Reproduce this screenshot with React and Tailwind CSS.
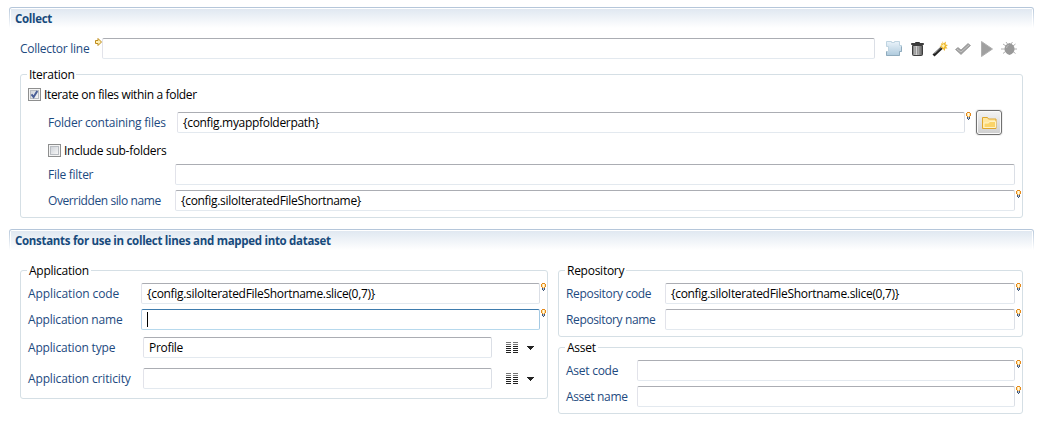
import React from "react";

function Bulb() {
  return (
    <svg width="5" height="8" viewBox="0 0 5 8" className="-mr-[6px] ml-[1px] shrink-0 self-start" shapeRendering="crispEdges">
      <path d="M1 0h3v1h1v3h-1v2h-3v-2h-1v-3h1z" fill="#e58a1c" />
      <path d="M1 1h3v3h-1v1h-1v-1h-1z" fill="#ffe3a3" />
      <path d="M2 1h1v3h-1z" fill="#fffbe8" />
      <path d="M1 5h3v2h-1v1h-1v-1h-1z" fill="#3f5677" />
      <path d="M2 5h1v2h-1z" fill="#b9c4d2" />
    </svg>
  );
}

function Field({ className, value, focused, bulb }) {
  return (
    <div className={"flex h-[21px] shrink-0 " + className}>
      <div
        className={
          "flex h-[21px] w-full shrink-0 items-center rounded-[2px] border bg-white pl-[5px] tracking-[-0.31px] text-black " +
          (focused
            ? "border-t-[#3d7bad] border-r-[#a4c9e3] border-b-[#b7d9ed] border-l-[#b5cfe7]"
            : "border-t-[#abadb3] border-r-[#dbdfe6] border-b-[#e3e9ef] border-l-[#e2e3ea]")
        }
      >
        {focused && <span className="h-[15px] w-px bg-black" />}
        {value}
      </div>
      {bulb && <Bulb />}
    </div>
  );
}

function Check({ checked, className, children }) {
  return (
    <div className="flex h-[13px] items-center gap-[3px] text-black">
      <span className="flex size-[13px] items-center justify-center border border-[#8e8f8f] bg-[#f4f4f4]">
        <span className="flex size-[9px] items-center justify-center border border-[#b9bdc2] bg-linear-to-br from-[#d0d4da] to-[#f6f6f6]">
          {checked && (
            <svg width="9" height="9" viewBox="0 0 9 9" className="shrink-0">
              <path d="M1.500 4.300L3.600 7L7.300 1" fill="none" stroke="#4a5f97" strokeWidth="2" />
            </svg>
          )}
        </span>
      </span>
      <span className={className}>{children}</span>
    </div>
  );
}

function Header({ children }) {
  return (
    <div className="h-[21px] rounded-t-[3px] bg-linear-to-b from-[#b3c5d9] to-white px-px pt-px">
      <div className="h-[20px] rounded-t-[2px] bg-white px-px pt-px">
        <div className="flex h-[19px] items-center bg-linear-to-b from-[#e0e8f1] to-white pl-[4px] text-[11.5px] font-bold tracking-[-0.3px] text-[#174a7c]">
          {children}
        </div>
      </div>
    </div>
  );
}

function Group({ title, className, children }) {
  return (
    <section className={"rounded-[3px] border border-[#d5dfe5] pl-[7px] " + className}>
      <div className="-mt-[8px] -ml-[1px] flex h-[15px]">
        <h3 className="bg-white px-[2px] leading-[15px] text-black">{title}</h3>
      </div>
      {children}
    </section>
  );
}

function Row({ className, label, labelClass, children }) {
  return (
    <div className={"flex h-[21px] items-center " + className}>
      <label className={"shrink-0 " + labelClass}>{label}</label>
      {children}
    </div>
  );
}

function ListMenu() {
  return (
    <svg width="28" height="12" viewBox="0 0 28 12" className="ml-[14px] shrink-0" shapeRendering="crispEdges">
      {[0, 2, 4, 6, 8, 10].map((y) => (
        <path key={y} d={`M0 ${y}h5v1h-5zM7 ${y}h5v1h-5z`} fill={y < 4 ? "#777" : "#222"} />
      ))}
      <path d="M21 4h7v1h-1v1h-1v1h-1v1h-1v-1h-1v-1h-1v-1h-1z" fill="#222" />
    </svg>
  );
}

function Toolbar() {
  return (
    <div className="ml-[11px] flex h-[16px] items-center">
      <svg width="16" height="16" viewBox="0 0 16 16">
        <defs>
          <linearGradient id="piece" x1="0" y1="0" x2="0" y2="1">
            <stop offset="0" stopColor="#eaf3fa" />
            <stop offset="1" stopColor="#aecadd" />
          </linearGradient>
          <linearGradient id="can" x1="0" y1="0" x2="1" y2="0">
            <stop offset="0" stopColor="#666" />
            <stop offset=".35" stopColor="#ddd" />
            <stop offset="1" stopColor="#555" />
          </linearGradient>
        </defs>
        <path d="M.5.5h5v1h3v-1h5v4h2v6h-2v4h-13v-4h2v-5h-2z" fill="url(#piece)" stroke="#bfd4e1" />
        <path d="M.5 10.500v4h13v-4h2v-5" fill="none" stroke="#8fabbd" />
      </svg>
      <svg width="13" height="16" viewBox="0 0 13 16" className="ml-[9px]">
        <path d="M1.500 4.500h10v9q0 1-1 1h-8q-1 0-1-1z" fill="url(#can)" stroke="#3c3c3c" />
        <path d="M4.500 5.500v8M6.500 5.500v8M8.500 5.500v8" stroke="#888" strokeWidth=".7" />
        <path d="M.5 3.500v-1h12v1z" fill="#777" stroke="#3c3c3c" />
        <path d="M4.500 2v-.5h4v.5" fill="none" stroke="#333" />
      </svg>
      <svg width="16" height="16" viewBox="0 0 16 16" className="ml-[8px]">
        <path d="M10.500 0l1 2.500 2.500-2-.5 3 2.500.5-2 1.500 1.500 2-2.500 0 0 2.500-2-2-2.500.5 1-2-2-1.500 2-.5-.5-2.500 1.500 1z" fill="#f0b92c" />
        <path d="M11.500 3l1.500 1.500-1.500 2.500-2-2z" fill="#fff4b5" />
        <path d="M1.500 14.500L9.500 7" stroke="#222" strokeWidth="3" />
        <path d="M2.500 12.500L9 6.500" stroke="#999" strokeWidth=".9" />
      </svg>
      <svg width="16" height="16" viewBox="0 0 16 16" className="ml-[7px]">
        <path d="M.5 8.500L3 6.500L6 9L13 2.500L15.500 4.500L6 13.500z" fill="#9f9f9f" stroke="#929292" strokeWidth=".7" />
        <path d="M2 8.200l4 2.800L14 4" fill="none" stroke="#c8c8c8" strokeWidth=".9" />
      </svg>
      <svg width="12" height="16" viewBox="0 0 12 16" className="ml-[10px]">
        <path d="M.5.5L11.500 8L.5 15.500z" fill="#a0a0a0" stroke="#b0b0b0" />
      </svg>
      <svg width="16" height="16" viewBox="0 0 16 16" className="ml-[8px]">
        <path d="M5 5L2 3M12 5l2.500-2M4 8H0M12 8h4M4.500 10.500L2 12.500M12 10.500l2.500 2M6.500 3l-1.500-2M10 3l1.500-2" stroke="#b0b0b0" />
        <path d="M8.500 2q5 1.500 5 6q0 4-5 6q-5-2-5-6q0-4.500 5-6z" fill="#999" />
        <path d="M5.500 7q.5-2 2-3" fill="none" stroke="#bdbdbd" />
      </svg>
    </div>
  );
}

export default function App() {
  return (
    <main className="h-[427px] w-[1044px] overflow-hidden bg-white pt-[7px] pr-[10px] pl-[9px] font-['Open_Sans','Noto_Sans',sans-serif] text-[12px] leading-[16px] tracking-[-0.26px] whitespace-nowrap text-[#1d4a80]">
      <Header>Collect</Header>
      <div className="mt-[10px] flex h-[21px] items-center pl-[11px]">
        <label className="w-[75px] shrink-0">Collector line</label>
        <svg width="7" height="8" viewBox="0 0 7 8" className="self-start">
          <path d="M.5 2.500h2.500v-2L6.500 4L3 7.500v-2h-2.500z" fill="#fff0b5" stroke="#be8b1b" />
        </svg>
        <Field className="w-[773px]" />
        <Toolbar />
      </div>

      <Group title="Iteration" className="mt-[15px] ml-[11px] h-[144px] w-[1003px]">
        <div className="mt-[6px]">
          <Check checked className="tracking-[-0.35px]">Iterate on files within a folder</Check>
        </div>
        <div className="pl-[20px]">
          <Row className="mt-[11px]" label="Folder containing files" labelClass="w-[129px] tracking-[-0.22px]">
            <Field className="w-[788px]" value="{config.myappfolderpath}" bulb />
            <button className="ml-[11px] flex h-[25px] w-[26px] shrink-0 items-center justify-center rounded-[3px] border border-[#707070] bg-linear-to-b from-[#f3f3f3] to-[#cfcfcf] shadow-[inset_0_0_0_1px_#fafafa,0_0_0_1px_#f0f0f0]">
              <svg width="15" height="12" viewBox="0 0 15 12">
                <path d="M.5 11.500v-11h5l1 1.500h7.500v9.500z" fill="#ffe7a0" stroke="#dfa62c" />
                <path d="M2 10.500v-4.500h4.500l1-1.500h6v6z" fill="#fbd468" stroke="#fff3c5" />
              </svg>
            </button>
          </Row>
          <div className="mt-[11px]">
            <Check>Include sub-folders</Check>
          </div>
          <Row className="mt-[7px]" label="File filter" labelClass="w-[127px]">
            <Field className="w-[840px]" />
          </Row>
          <Row className="mt-[5px]" label="Overridden silo name" labelClass="w-[127px] tracking-[-0.4px]">
            <Field className="w-[840px]" value="{config.siloIteratedFileShortname}" bulb />
          </Row>
        </div>
      </Group>

      <div className="mt-[11px]">
        <Header>Constants for use in collect lines and mapped into dataset</Header>
      </div>
      <div className="mt-[20px] flex items-start gap-[10px] pl-[11px]">
        <Group title="Application" className="h-[129px] w-[528px]">
          <Row className="mt-[5px]" label="Application code" labelClass="w-[113px] tracking-[-0.1px]">
            <Field className="w-[399px]" value="{config.siloIteratedFileShortname.slice(0,7)}" bulb />
          </Row>
          <Row className="mt-[5px]" label="Application name" labelClass="w-[113px] tracking-[-0.2px]">
            <Field className="w-[399px]" focused bulb />
          </Row>
          <Row className="mt-[7px]" label="Application type" labelClass="w-[115px] tracking-[-0.18px]">
            <Field className="w-[349px]" value="Profile" />
            <ListMenu />
          </Row>
          <Row className="mt-[10px]" label="Application criticity" labelClass="w-[115px] tracking-[-0.15px]">
            <Field className="w-[349px]" />
            <ListMenu />
          </Row>
        </Group>
        <div className="flex flex-col gap-[10px]">
          <Group title="Repository" className="h-[67px] w-[465px]">
            <Row className="mt-[5px]" label="Repository code" labelClass="w-[99px] tracking-[-0.32px]">
              <Field className="w-[350px]" value="{config.siloIteratedFileShortname.slice(0,7)}" bulb />
            </Row>
            <Row className="mt-[5px]" label="Repository name" labelClass="w-[99px] tracking-[-0.36px]">
              <Field className="w-[350px]" bulb />
            </Row>
          </Group>
          <Group title="Asset" className="h-[67px] w-[465px]">
            <Row className="mt-[5px]" label="Aset code" labelClass="w-[71px]">
              <Field className="w-[378px]" bulb />
            </Row>
            <Row className="mt-[5px]" label="Asset name" labelClass="w-[71px] tracking-[-0.35px]">
              <Field className="w-[378px]" bulb />
            </Row>
          </Group>
        </div>
      </div>
    </main>
  );
}
